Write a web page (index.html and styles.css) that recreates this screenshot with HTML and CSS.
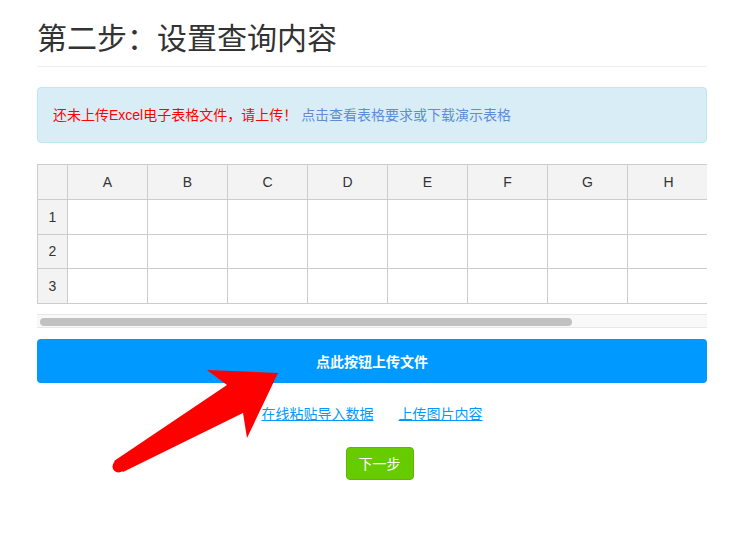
FILE: index.html
```html
<!DOCTYPE html>
<html lang="zh-CN">
<head>
<meta charset="utf-8">
<title>第二步：设置查询内容</title>
<link rel="stylesheet" href="styles.css">
</head>
<body>
<div class="page">
  <h1 class="title">第二步：设置查询内容</h1>
  <div class="alert">
    <span class="alert-warn">还未上传Excel电子表格文件，请上传！</span>
    <a class="alert-link" href="#">点击查看表格要求或下载演示表格</a>
  </div>
  <div class="sheet">
    <div class="sheet-view">
      <table class="grid">
        <colgroup>
          <col class="c-head"><col class="c-col"><col class="c-col"><col class="c-col"><col class="c-col"><col class="c-col"><col class="c-col"><col class="c-col"><col class="c-last">
        </colgroup>
        <thead>
          <tr><th class="corner"></th><th>A</th><th>B</th><th>C</th><th>D</th><th>E</th><th>F</th><th>G</th><th>H</th></tr>
        </thead>
        <tbody>
          <tr><th class="rowh">1</th><td></td><td></td><td></td><td></td><td></td><td></td><td></td><td></td></tr>
          <tr><th class="rowh">2</th><td></td><td></td><td></td><td></td><td></td><td></td><td></td><td></td></tr>
          <tr><th class="rowh">3</th><td></td><td></td><td></td><td></td><td></td><td></td><td></td><td></td></tr>
        </tbody>
      </table>
    </div>
    <div class="scroll-track"><div class="scroll-thumb"></div></div>
  </div>
  <button class="upload-btn" type="button">点此按钮上传文件</button>
  <div class="links">
    <a href="#" class="link">在线粘贴导入数据</a>
    <a href="#" class="link">上传图片内容</a>
  </div>
  <div class="next-row">
    <button class="next-btn" type="button">下一步</button>
  </div>
</div>
<svg class="arrow" width="751" height="536" viewBox="0 0 751 536" aria-hidden="true">
  <polygon points="114,461 227,385 207,370 278,373 247,438 243,413 123,472" fill="#ff0000"/>
  <circle cx="118.5" cy="466.5" r="6" fill="#ff0000"/>
</svg>
</body>
</html>
```
FILE: styles.css
```css
* { box-sizing: border-box; }
html, body { margin: 0; padding: 0; background: #fff; }
body {
  font-family: "Liberation Sans", "Noto Sans CJK SC", sans-serif;
  font-size: 14px;
  color: #333;
  position: relative;
  width: 751px;
  height: 536px;
  overflow: hidden;
}
.page {
  width: 670px;
  margin-left: 37px;
  padding-top: 22px;
}
.title {
  margin: 0;
  font-size: 30px;
  font-weight: normal;
  line-height: 34px;
  color: #333;
  padding-bottom: 10px;
  border-bottom: 1px solid #eee;
}
.alert {
  margin-top: 20px;
  background: #d9edf7;
  border: 1px solid #bce8f1;
  border-radius: 4px;
  padding: 17px 15px;
  line-height: 20px;
  font-size: 14px;
}
.alert-warn { color: #ff0000; }
.alert-link {
  color: #5b8ed6;
  text-decoration: none;
  margin-left: 0;
}
.sheet { margin-top: 21px; }
.sheet-view {
  overflow: hidden;
  width: 670px;
}
.grid {
  border-collapse: collapse;
  table-layout: fixed;
  width: 672px;
}
.c-head { width: 30px; }
.c-col { width: 80px; }
.c-last { width: 82px; }
.grid th, .grid td {
  border: 1px solid #ccc;
  padding: 0;
  text-align: center;
  font-weight: normal;
  font-size: 14px;
  color: #333;
}
.grid thead th { background: #f3f3f3; height: 35px; }
.grid tbody th, .grid tbody td { height: 34.67px; }
.grid th.corner, .grid th.rowh { background: #f3f3f3; }
.grid tbody td { background: #fff; }
.scroll-track {
  margin-top: 10px;
  height: 14px;
  background: #f9f9f9;
  border-top: 1px solid #e8e8e8;
  border-bottom: 1px solid #e8e8e8;
  padding: 3px 0 0 3px;
}
.scroll-thumb {
  width: 532px;
  height: 8px;
  border-radius: 4px;
  background: #c1c1c1;
}
.upload-btn {
  display: block;
  width: 100%;
  height: 44px;
  margin-top: 11px;
  border: 0;
  border-radius: 4px;
  background: #0099ff;
  color: #fff;
  font-family: inherit;
  font-size: 14px;
  font-weight: bold;
}
.links {
  display: flex;
  justify-content: center;
  gap: 25px;
  margin-top: 21px;
  line-height: 20px;
}
.link {
  color: #0099ff;
  text-decoration: underline;
  font-size: 14px;
}
.next-row {
  display: flex;
  justify-content: center;
  margin-top: 23px;
  padding-left: 15px;
}
.next-btn {
  height: 33px;
  padding: 0 12px;
  border: 1px solid #5cb800;
  border-radius: 4px;
  background: #66cc00;
  color: #fff;
  font-family: inherit;
  font-size: 14px;
}
.arrow {
  position: absolute;
  left: 0;
  top: 0;
  pointer-events: none;
}
```
